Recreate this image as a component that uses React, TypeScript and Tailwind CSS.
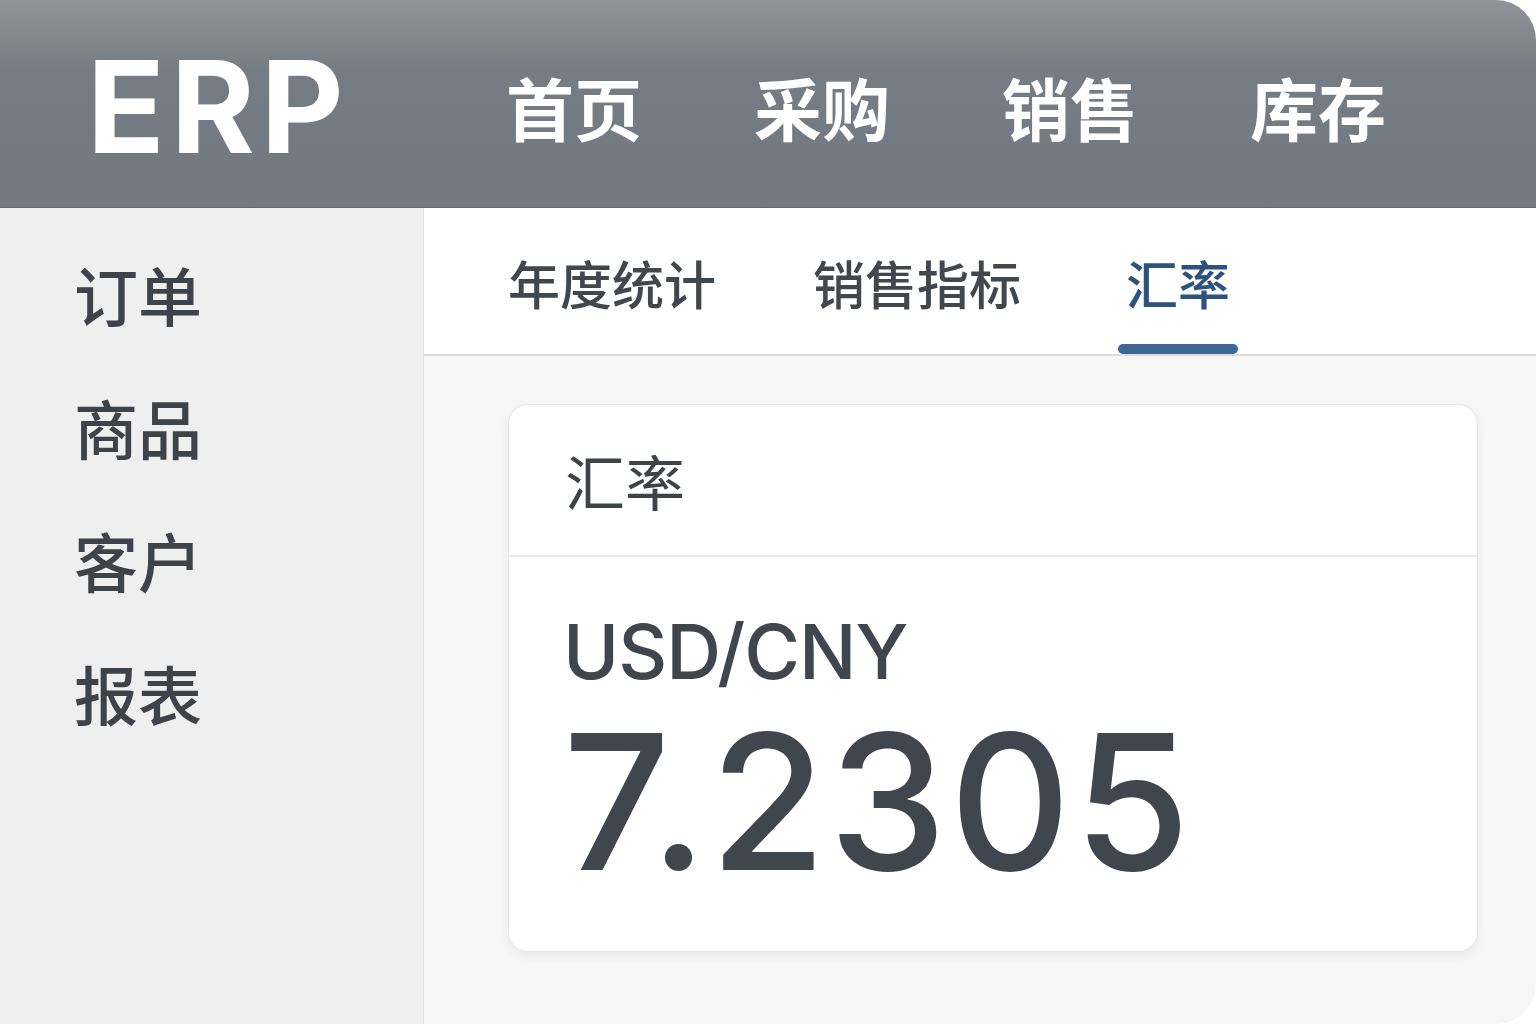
import React from "react";

const cjk = { fontFamily: '"Noto Sans CJK SC", "Noto Sans", sans-serif' };
const latin = { fontFamily: 'Inter, "Liberation Sans", Arial, sans-serif' };

const topNav = ["首页", "采购", "销售", "库存"];
const sideNav = ["订单", "商品", "客户", "报表"];
const tabs = ["年度统计", "销售指标", "汇率"];
const activeTab = "汇率";

export default function App() {
  return (
    <div className="w-[1536px] h-[1024px] bg-white">
      <div className="flex flex-col w-full h-full overflow-hidden rounded-tr-[40px] rounded-br-[40px] bg-[#f7f7f7]">
        {/* top bar */}
        <header className="flex items-center h-[208px] shrink-0 bg-linear-to-b from-[#8f949a] via-[#767c83] via-35% to-[#727980] border-b border-[#62686e]">
          <div className="w-[424px] pl-[87px] pt-[6px]">
            <span
              className="text-[128px] font-bold leading-none tracking-[6px] text-white"
              style={{ fontFamily: 'Inter, "Open Sans", sans-serif' }}
            >
              ERP
            </span>
          </div>
          <nav className="flex gap-[112px] pl-[82px] pt-[6px]" style={cjk}>
            {topNav.map((item) => (
              <span key={item} className="text-[68px] font-bold leading-none text-white">
                {item}
              </span>
            ))}
          </nav>
        </header>

        <div className="flex flex-1 min-h-0">
          {/* sidebar */}
          <aside className="w-[424px] shrink-0 bg-[#efefef] border-r border-[#e2e2e2] pt-[18px]" style={cjk}>
            {sideNav.map((item) => (
              <div key={item} className="flex items-center h-[133px] pl-[74px] text-[64px] leading-none font-medium text-[#3e434a]">
                {item}
              </div>
            ))}
          </aside>

          <main className="flex flex-col flex-1 min-w-0">
            {/* tabs */}
            <div className="flex gap-[97px] pl-[84px] h-[148px] shrink-0 bg-white border-b-2 border-[#dcdcdc]" style={cjk}>
              {tabs.map((tab) => {
                const active = tab === activeTab;
                return (
                  <div key={tab} className="flex flex-col items-center h-full">
                    <div
                      className={
                        "flex flex-1 items-center text-[52px] leading-none pt-[14px] font-medium " +
                        (active ? "text-[#2d5280]" : "text-[#42474e]")
                      }
                    >
                      {tab}
                    </div>
                    <div className={active ? "w-[120px] h-[10px] rounded-full bg-[#3f6794]" : "h-[10px]"} />
                  </div>
                );
              })}
            </div>

            {/* content */}
            <div className="pl-[84px] pr-[58px] pt-[48px]">
              <div className="bg-white rounded-[20px] border border-[#e6e6e6] shadow-[0_4px_12px_rgba(0,0,0,0.06)]">
                <div className="flex items-center h-[152px] pl-[56px] border-b-2 border-[#ececec]" style={cjk}>
                  <span className="text-[60px] leading-none text-[#3e434a]">汇率</span>
                </div>
                <div className="pl-[54px] pt-[56px] pb-[55px] text-[#40464d] font-medium" style={latin}>
                  <div className="text-[76px] leading-none tracking-[-1px]">USD/CNY</div>
                  <div className="mt-[19px] text-[188px] leading-none tracking-[3px]">7.2305</div>
                </div>
              </div>
            </div>
          </main>
        </div>
      </div>
    </div>
  );
}
